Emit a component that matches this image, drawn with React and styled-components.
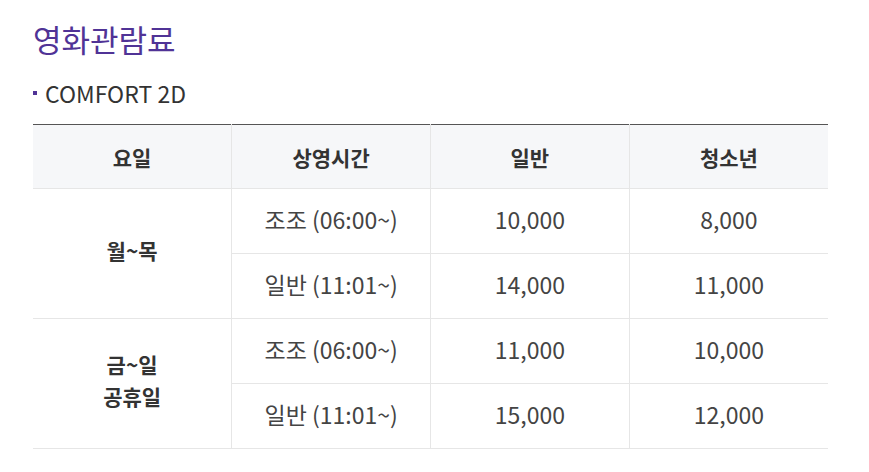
import React from 'react';
import styled, { createGlobalStyle } from 'styled-components';

const GlobalStyle = createGlobalStyle`
  html, body {
    margin: 0;
    padding: 0;
    background: #fff;
    font-family: "Noto Sans CJK KR", "Noto Sans", sans-serif;
    color: #444;
  }
`;

const ROWS = [
  { day: ['월~목'], times: [
    { label: '조조 (06:00~)', adult: '10,000', teen: '8,000' },
    { label: '일반 (11:01~)', adult: '14,000', teen: '11,000' },
  ] },
  { day: ['금~일', '공휴일'], times: [
    { label: '조조 (06:00~)', adult: '11,000', teen: '10,000' },
    { label: '일반 (11:01~)', adult: '15,000', teen: '12,000' },
  ] },
];

const App = () => (
  <Page>
    <GlobalStyle />
    <Title>영화관람료</Title>
    <SubTitle>COMFORT 2D</SubTitle>
    <Table>
      <colgroup>
        <col /><col /><col /><col />
      </colgroup>
      <thead>
        <tr>
          <Th>요일</Th>
          <Th>상영시간</Th>
          <Th>일반</Th>
          <Th>청소년</Th>
        </tr>
      </thead>
      <tbody>
        {ROWS.map((group) =>
          group.times.map((t, i) => (
            <tr key={group.day[0] + i}>
              {i === 0 && (
                <DayCell rowSpan={group.times.length}>
                  {group.day.map((d) => <DayLine key={d}>{d}</DayLine>)}
                </DayCell>
              )}
              <Td>{t.label}</Td>
              <Td>{t.adult}</Td>
              <Td>{t.teen}</Td>
            </tr>
          ))
        )}
      </tbody>
    </Table>
  </Page>
);

const Page = styled.div`
  width: 795px;
  padding: 15px 0 0 33px;
`;

const Title = styled.h2`
  margin: 0;
  font-size: 31px;
  font-weight: 400;
  line-height: 48px;
  color: #503396;
`;

const SubTitle = styled.h3`
  margin: 14px 0 0;
  padding-left: 12px;
  position: relative;
  font-size: 23px;
  font-weight: 400;
  line-height: 32px;
  color: #333;

  &::before {
    content: '';
    position: absolute;
    left: 0;
    top: 14px;
    width: 4px;
    height: 4px;
    background: #503396;
  }
`;

const Table = styled.table`
  width: 795px;
  margin-top: 15px;
  border-collapse: collapse;
  table-layout: fixed;
  border-top: 1px solid #555;

  col { width: 25%; }
`;

const Th = styled.th`
  height: 63px;
  padding: 0;
  background: #f6f7f9;
  border-left: 1px solid #e6e6e6;
  border-bottom: 1px solid #e6e6e6;
  font-size: 21px;
  font-weight: 700;
  color: #333;
  text-align: center;
  vertical-align: middle;

  &:first-child { border-left: 0; }
`;

const Td = styled.td`
  box-sizing: border-box;
  height: 65px;
  padding: 0 0 5px;
  border-left: 1px solid #e6e6e6;
  border-bottom: 1px solid #e6e6e6;
  font-size: 23px;
  line-height: 30px;
  color: #444;
  text-align: center;
  vertical-align: middle;
`;

const DayCell = styled(Td)`
  border-left: 0;
  padding: 0 0 8px;
  font-size: 21px;
  font-weight: 700;
  color: #333;
`;

const DayLine = styled.div`
  line-height: 32px;
`;

export default App;
